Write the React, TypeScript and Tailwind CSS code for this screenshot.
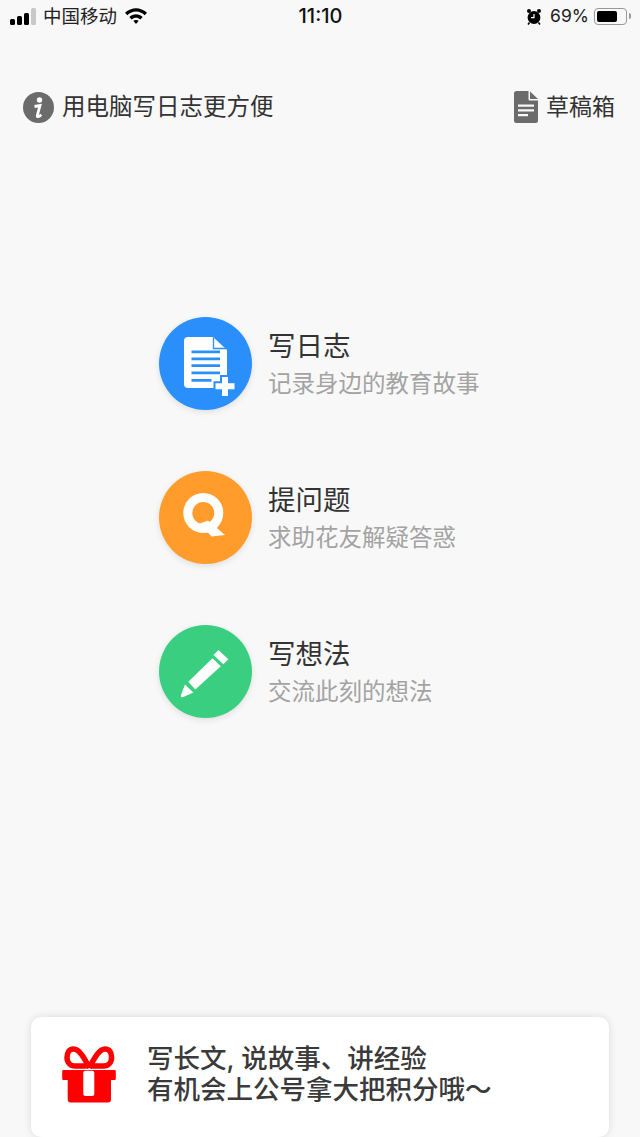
import React from "react";

const cjk = "font-['Inter','Noto_Sans_CJK_SC',sans-serif]";

function StatusBar() {
  return (
    <div className="flex h-[32px] shrink-0 items-center justify-between pl-[10px] pr-[9px] text-[#111]">
      <div className="flex w-[200px] items-center">
        <div className="flex items-end gap-[2px]">
          <div className="h-[6px] w-[5px] rounded-[1.5px] bg-black" />
          <div className="h-[9px] w-[5px] rounded-[1.5px] bg-black" />
          <div className="h-[12px] w-[5px] rounded-[1.5px] bg-black" />
          <div className="h-[17px] w-[5px] rounded-[1.5px] bg-[#c8c8c8]" />
        </div>
        <span className="ml-[7px] text-[18.5px] leading-none text-[#222]">中国移动</span>
        <svg className="ml-[8px]" width="22" height="16" viewBox="0 0 22 16">
          <path d="M0 4.800C6.500-1.400 15.500-1.400 22 4.800l-2.300 2.400C14.500 2.400 7.500 2.400 2.300 7.200z" fill="#000" />
          <path d="M4.300 9C8.300 5.400 13.700 5.400 17.700 9l-2.400 2.400c-2.700-2.200-5.900-2.200-8.600 0z" fill="#000" />
          <path d="M8.300 12.800c1.700-1.100 3.700-1.100 5.400 0L11 16z" fill="#000" />
        </svg>
      </div>
      <span className="text-[20px] font-medium leading-none">11:10</span>
      <div className="flex w-[200px] items-center justify-end">
        <svg width="16" height="17" viewBox="0 0 16 17">
          <circle cx="8" cy="9.500" r="6.400" fill="#000" />
          <circle cx="3" cy="3" r="2" fill="#000" />
          <circle cx="13" cy="3" r="2" fill="#000" />
          <path d="M8 6v3.700H5" stroke="#fff" strokeWidth="1.200" fill="none" />
          <path d="M3.500 14.500L2 16.500M12.500 14.500L14 16.500" stroke="#000" strokeWidth="1.500" />
        </svg>
        <span className="ml-[8px] text-[17.5px] leading-none text-[#222]">69%</span>
        <div className="ml-[5px] flex h-[17px] w-[33px] items-center rounded-[4px] border border-[#999] p-[2px]">
          <div className="h-full w-[20px] rounded-[2px] bg-black" />
        </div>
        <div className="ml-[2px] h-[6px] w-[2px] rounded-r-[2px] bg-[#999]" />
      </div>
    </div>
  );
}

function Header() {
  return (
    <div className="mt-[59px] flex h-[32px] shrink-0 items-center justify-between pl-[23px] pr-[25px]">
      <div className="flex items-center">
        <svg width="31" height="31" viewBox="0 0 31 31">
          <circle cx="15.500" cy="15.500" r="15.500" fill="#6b6b6b" />
          <circle cx="16.500" cy="8" r="2.700" fill="#fff" />
          <path d="M11.500 14.500l5.500-1-2.700 10c-.3 1.500 1 1.800 4-.8" stroke="#fff" strokeWidth="2.800" fill="none" />
        </svg>
        <span className="ml-[8px] text-[23.500px] leading-none text-[#333]">用电脑写日志更方便</span>
      </div>
      <div className="flex items-center">
        <svg width="24" height="32" viewBox="0 0 24 32">
          <path d="M2.500 0H14.500v8c0 1 .6 1.500 1.500 1.500h8v20a2.500 2.500 0 0 1-2.500 2.500h-19A2.500 2.500 0 0 1 0 29.500v-27A2.500 2.500 0 0 1 2.500 0z" fill="#6b6b6b" />
          <path d="M16 .5l8 7.500h-8z" fill="#6b6b6b" />
          <path d="M4 13.500h16v2.300H4zM4 18.300h16v2.300H4zM4 23h10v2.300H4z" fill="#f8f8f8" />
        </svg>
        <span className="ml-[8px] text-[23px] leading-none text-[#333]">草稿箱</span>
      </div>
    </div>
  );
}

function Action({ color, title, desc, children }: { color: string; title: string; desc: string; children: React.ReactNode }) {
  return (
    <div className="flex h-[93px] items-center">
      <div className={`h-[93px] w-[93px] shrink-0 rounded-full shadow-[0_2px_6px_rgba(0,0,0,0.1)] ${color}`}>
        <svg width="93" height="93" viewBox="0 0 93 93">
          {children}
        </svg>
      </div>
      <div className="ml-[16px] flex flex-col">
        <span className="text-[27.500px] leading-[34px] text-[#333]">{title}</span>
        <span className="mt-[6px] text-[23.500px] leading-[30px] text-[#a3a3a3]">{desc}</span>
      </div>
    </div>
  );
}

export default function App() {
  return (
    <div className={`flex h-[1137px] w-[640px] flex-col overflow-hidden bg-[#f8f8f8] ${cjk}`}>
      <StatusBar />
      <Header />

      {/* Actions */}
      <div className="ml-[159px] mt-[194px] flex flex-col gap-[61px]">
        <Action color="bg-[#2a8ffb]" title="写日志" desc="记录身边的教育故事">
          <path d="M29 20h25l14 13v38H29a4 4 0 0 1-4-4V24a4 4 0 0 1 4-4z" fill="#fff" />
          <path d="M54.500 20.500v11h12.500" stroke="#2a8ffb" strokeWidth="1.300" fill="none" />
          <path d="M32.500 33.500h28.500v2.700H32.500zM32.500 40.500h28.500v2.700H32.500zM32.500 47.300h28.500v2.700H32.500zM32.500 54.500h28.500v2.700H32.500zM32.500 62h20v2.700h-20z" fill="#2a8ffb" />
          <path d="M63 60h6v6.300h6.500v6h-6.500V79h-6v-6.700h-6.500v-6H63z" fill="#fff" stroke="#2a8ffb" strokeWidth="4" paintOrder="stroke" />
        </Action>
        <Action color="bg-[#ff9c2b]" title="提问题" desc="求助花友解疑答惑">
          <path d="M44.300 22a20 20 0 1 0 0 40 20 20 0 1 0 0-40zm0 9a11 11 0 1 1 0 22 11 11 0 1 1 0-22z" fill="#fff" fillRule="evenodd" />
          <path d="M41 52.500l8-3L66 64l-13.500 1.500z" fill="#fff" />
        </Action>
        <Action color="bg-[#3ace80]" title="写想法" desc="交流此刻的想法">
          <path d="M59.500 25l9.800 9.300-5 5-9.800-9.300z" fill="#fff" />
          <path d="M53.500 33.300l8.300 7.900-25.500 23.300-7-7.800z" fill="#fff" />
          <path d="M26 59.500l8.300 8-10.500 4.700c-1.300.4-2.300-.5-2-1.800z" fill="#fff" />
        </Action>
      </div>

      {/* Promo card */}
      <div className="mx-[31px] mt-auto flex h-[120px] shrink-0 items-center rounded-[10px] bg-white pb-[6px] pl-[31px] shadow-[0_0_8px_rgba(0,0,0,0.12)]">
        <svg width="54" height="57" viewBox="0 0 54 57" className="shrink-0">
          <path d="M27.300 22C22 11 17 3 11.500 3 7 3 5 7 5 11.500 5 16.500 8.500 20 13 20h11M27.300 22C32.600 11 37.600 3 43.100 3c4.500 0 6.500 4 6.500 8.500 0 5-3.500 8.500-8 8.500H30" stroke="#fe0000" strokeWidth="5.500" fill="none" />
          <path d="M1.500 24h51a1.300 1.300 0 0 1 1.300 1.300v7.400a1.300 1.300 0 0 1-1.300 1.300H49v19.500a3 3 0 0 1-3 3H8.700a3 3 0 0 1-3-3V34H1.500A1.300 1.300 0 0 1 .2 32.700v-7.400A1.300 1.300 0 0 1 1.500 24z" fill="#fe0000" />
          <rect x="21.300" y="24.700" width="11" height="25.300" rx="2" fill="#fff" />
        </svg>
        <div className="ml-[31px] flex flex-col text-[26.500px] font-medium leading-[31px] text-[#3a3a3a]">
          <span>写长文, 说故事、讲经验</span>
          <span>有机会上公号拿大把积分哦～</span>
        </div>
      </div>
    </div>
  );
}
